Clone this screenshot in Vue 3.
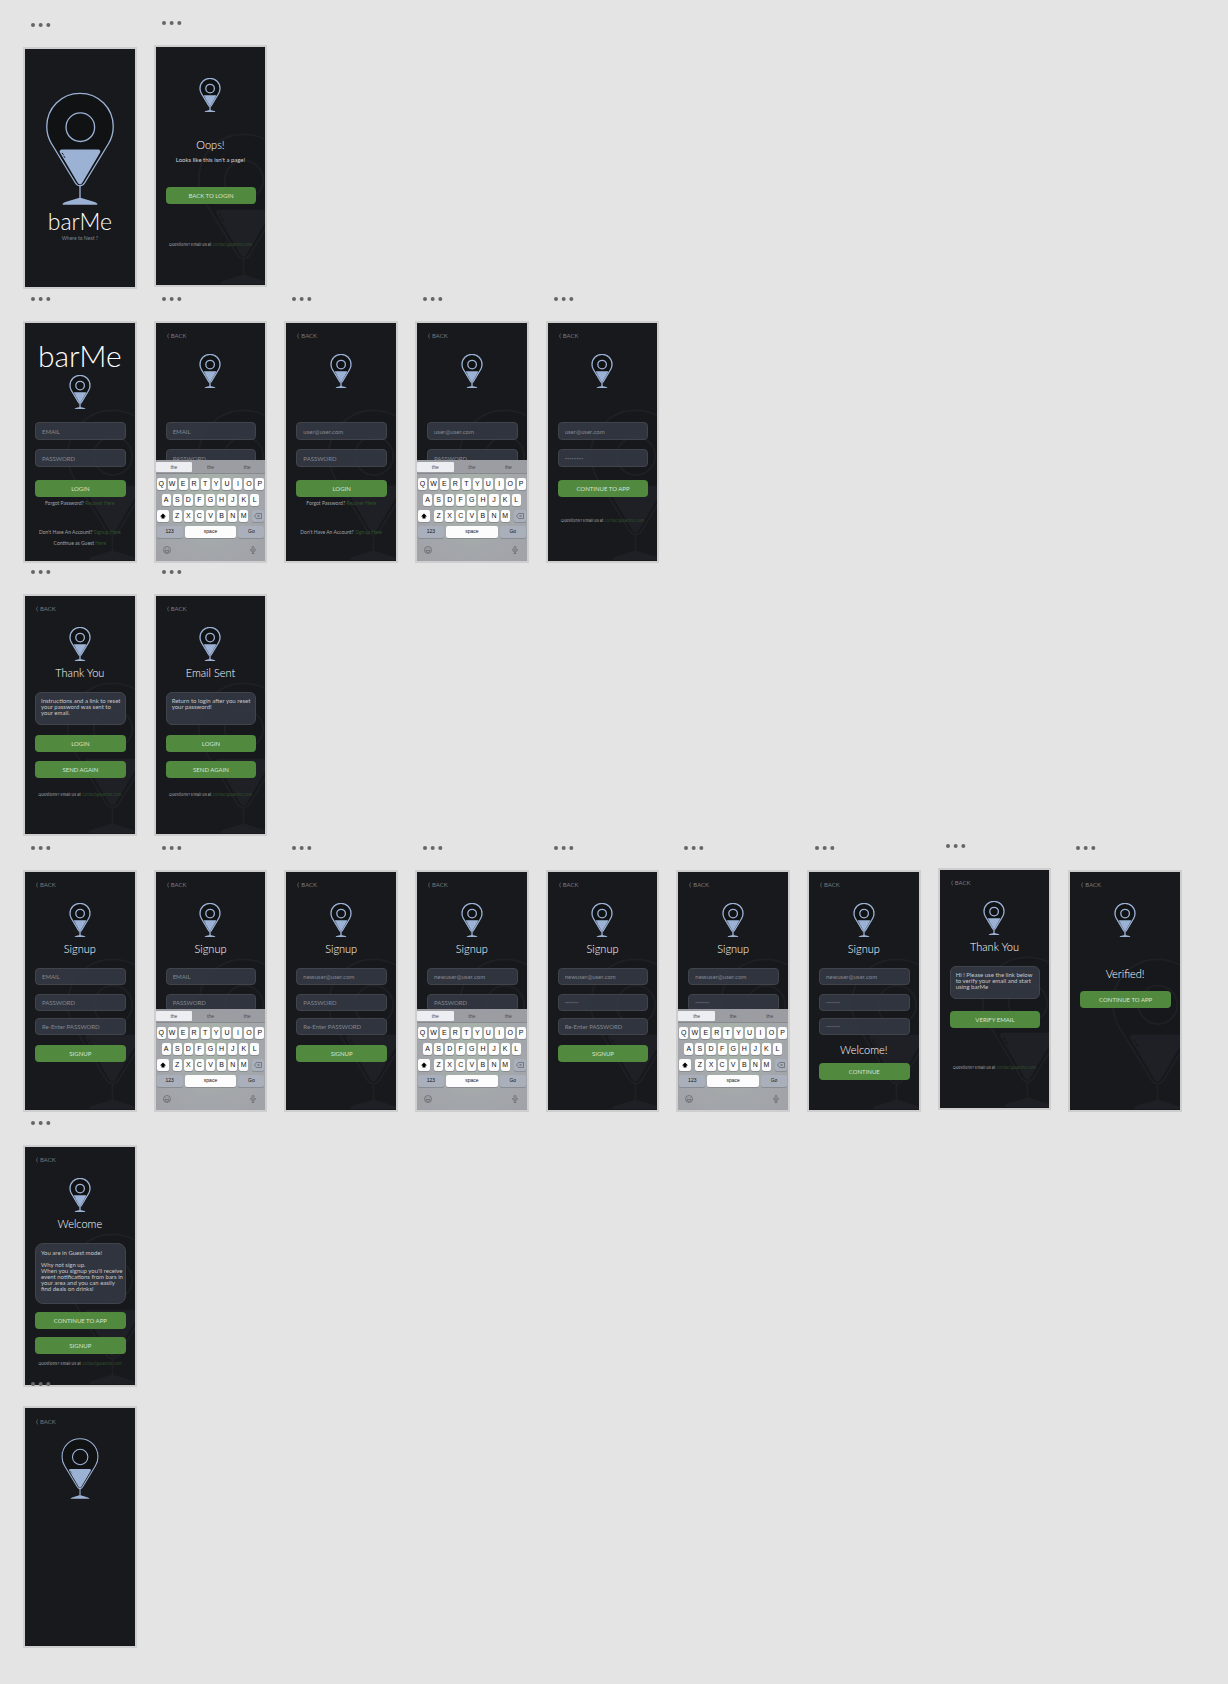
<script setup>
const login = { kind: 'submit', text: 'LOGIN' }
const back = { kind: 'back' }
const logo = { kind: 'logo' }
const contact = { kind: 'note', cls: 'contact', text: 'Questions? Email us at', link: 'contact@barme.com' }
const forgot = { kind: 'note', cls: 'forgot', text: 'Forgot Password?', link: 'Recover Here' }
const join = { kind: 'note', cls: 'join', text: "Don't Have An Account?", link: 'Signup Here' }
const keyboard = { kind: 'keyboard' }

const heading = (text) => ({ kind: 'heading', text })
const button = (text) => ({ kind: 'submit', text })
const card = (text) => ({ kind: 'card', text })
const email = (value = '') => ({ kind: 'field', type: 'text', label: 'EMAIL', value })
const password = (value = '') => ({ kind: 'field', type: 'password', label: 'PASSWORD', value })
const repeat = (value = '') => ({ kind: 'field', type: 'password', label: 'Re-Enter PASSWORD', value })

const secret = '12345678'
const newUser = 'newuser@user.com'

const flows = [
  {
    name: 'start',
    screens: [
      { cls: 'splash', plain: true, blocks: [logo, { kind: 'brand' }, { kind: 'note', cls: 'tagline', text: 'Where to Next ?' }] },
      {
        cls: 'oops raised',
        blocks: [logo, heading('Oops!'), { kind: 'lead', text: "Looks like this isn't a page!" }, button('BACK TO LOGIN'), contact],
      },
    ],
  },
  {
    name: 'login-flow',
    screens: [
      {
        cls: 'login home',
        blocks: [
          { kind: 'brand' }, logo, email(), password(), login, forgot, join,
          { kind: 'note', cls: 'guest', text: 'Continue as Guest', link: 'Here' },
        ],
      },
      { cls: 'login', blocks: [back, logo, email(), password(), keyboard] },
      { cls: 'login', blocks: [back, logo, email('user@user.com'), password(), login, forgot, join] },
      { cls: 'login', blocks: [back, logo, email('user@user.com'), password(), keyboard] },
      { cls: 'login', blocks: [back, logo, email('user@user.com'), password(secret), button('CONTINUE TO APP'), contact] },
    ],
  },
  {
    name: 'reset-flow',
    screens: [
      {
        cls: 'message',
        blocks: [back, logo, heading('Thank You'), card('Instructions and a link to reset\nyour password was sent to\nyour email.'), login, button('SEND AGAIN'), contact],
      },
      {
        cls: 'message',
        blocks: [back, logo, heading('Email Sent'), card('Return to login after you reset\nyour password!'), login, button('SEND AGAIN'), contact],
      },
    ],
  },
  {
    name: 'signup-flow',
    screens: [
      { cls: 'signup', blocks: [back, logo, heading('Signup'), email(), password(), repeat(), button('SIGNUP')] },
      { cls: 'signup', blocks: [back, logo, heading('Signup'), email(), password(), keyboard] },
      { cls: 'signup', blocks: [back, logo, heading('Signup'), email(newUser), password(), repeat(), button('SIGNUP')] },
      { cls: 'signup', blocks: [back, logo, heading('Signup'), email(newUser), password(), keyboard] },
      { cls: 'signup', blocks: [back, logo, heading('Signup'), email(newUser), password(secret), repeat(), button('SIGNUP')] },
      { cls: 'signup', blocks: [back, logo, heading('Signup'), email(newUser), password(secret), keyboard] },
      {
        cls: 'signup done',
        blocks: [back, logo, heading('Signup'), email(newUser), password(secret), repeat(secret), heading('Welcome!'), button('CONTINUE')],
      },
      {
        cls: 'verify raised',
        blocks: [back, logo, heading('Thank You'), card('Hi ! Please use the link below\nto verify your email and start\nusing barMe'), button('VERIFY EMAIL'), contact],
      },
      { cls: 'verified', blocks: [back, logo, heading('Verified!'), button('CONTINUE TO APP')] },
    ],
  },
  {
    name: 'guest-flow',
    screens: [
      {
        cls: 'welcome',
        blocks: [
          back, logo, heading('Welcome'),
          card("You are in Guest mode!\n\nWhy not sign up.\nWhen you signup you'll receive\nevent notifications from bars in\nyour area and you can easily\nfind deals on drinks!"),
          button('CONTINUE TO APP'), button('SIGNUP'), contact,
        ],
      },
    ],
  },
  {
    name: 'blank-flow',
    screens: [{ cls: 'blank', plain: true, blocks: [back, logo] }],
  },
]

const topKeys = [...'QWERTYUIOP']
const homeKeys = [...'ASDFGHJKL']
const lowKeys = [...'ZXCVBNM']
</script>

<template>
  <svg class="defs" width="0" height="0" aria-hidden="true">
    <symbol id="pin" viewBox="0 0 208 340">
      <path class="pin-body" d="M104 4C48 4 4 48 4 104c0 20 5 36 14 51l72 118c7 12 21 12 28 0l72-118c9-15 14-31 14-51C204 48 160 4 104 4Z" stroke="currentColor" />
      <circle cx="105" cy="106" r="43" fill="none" stroke="currentColor" />
      <path d="M50 173h108c7 0 9 5 6 10l-53 90c-3 6-11 6-14 0L44 183c-3-5-1-10 6-10Z" fill="currentColor" stroke="none" />
      <path d="M50 183l4 6M55 192l4 6" stroke="#18191d" stroke-width="3" />
      <path d="M104 282v40" fill="none" stroke="currentColor" />
      <path d="M52 336q2-3 8-5l40-12q4-1 8 0l40 12q6 2 8 5v3H52Z" fill="currentColor" stroke="none" />
    </symbol>
  </svg>

  <main class="canvas">
    <section v-for="flow in flows" :key="flow.name" class="flow" :class="flow.name">
      <article v-for="(screen, s) in flow.screens" :key="s" class="frame" :class="screen.cls">
        <button class="more" aria-label="Artboard options">
          <svg width="20" height="4" viewBox="0 0 60 12">
            <circle cx="6" cy="6" r="6" /><circle cx="29" cy="6" r="6" /><circle cx="52" cy="6" r="6" />
          </svg>
        </button>
        <div class="board">
          <svg v-if="!screen.plain" class="watermark" aria-hidden="true"><use href="#pin" /></svg>
          <template v-for="(block, b) in screen.blocks" :key="b">
            <a v-if="block.kind === 'back'" class="back" href="#">
              <svg width="2" height="6" viewBox="0 0 2 6"><path d="M1.7.5.5 3l1.2 2.5" /></svg>BACK
            </a>
            <svg v-else-if="block.kind === 'logo'" class="logo" role="img" aria-label="barMe logo"><use href="#pin" /></svg>
            <h1 v-else-if="block.kind === 'brand'" class="brand">barMe</h1>
            <h2 v-else-if="block.kind === 'heading'" class="heading">{{ block.text }}</h2>
            <p v-else-if="block.kind === 'lead'" class="lead">{{ block.text }}</p>
            <input
              v-else-if="block.kind === 'field'"
              class="field"
              :type="block.type"
              :placeholder="block.label"
              :aria-label="block.label"
              :value="block.value"
              :class="{ masked: block.type === 'password' && block.value }"
              autocomplete="off"
            />
            <p v-else-if="block.kind === 'card'" class="card">{{ block.text }}</p>
            <button v-else-if="block.kind === 'submit'" class="action">{{ block.text }}</button>
            <p v-else-if="block.kind === 'note'" class="note" :class="block.cls">
              {{ block.text }} <a v-if="block.link" href="#">{{ block.link }}</a>
            </p>
            <div v-else class="keyboard">
              <div class="suggestions">
                <button class="picked">the</button><button>the</button><button>the</button>
              </div>
              <div class="keys">
                <button v-for="k in topKeys" :key="k" class="key">{{ k }}</button>
              </div>
              <div class="keys inset">
                <button v-for="k in homeKeys" :key="k" class="key">{{ k }}</button>
              </div>
              <div class="keys third">
                <button class="key side" aria-label="Shift">
                  <svg width="6" height="6" viewBox="0 0 12 12"><path d="M6 1 12 7H9v4H3V7H0Z" /></svg>
                </button>
                <div class="keys letters">
                  <button v-for="k in lowKeys" :key="k" class="key">{{ k }}</button>
                </div>
                <button class="key side muted" aria-label="Delete">
                  <svg class="line" width="8" height="6" viewBox="0 0 16 12">
                    <path d="M5 1h10v10H5L1 6Z" /><path d="m7 4 4 4m0-4-4 4" />
                  </svg>
                </button>
              </div>
              <div class="keys bottom">
                <button class="key muted">123</button>
                <button class="key space">space</button>
                <button class="key muted">Go</button>
              </div>
              <div class="tools">
                <button aria-label="Emoji">
                  <svg class="line" width="8" height="8" viewBox="0 0 16 16">
                    <circle cx="8" cy="8" r="7" /><path d="M4 9h8c0 5-8 5-8 0ZM5.500 5v1.500M10.500 5v1.500" />
                  </svg>
                </button>
                <button aria-label="Dictate">
                  <svg class="line" width="6" height="8" viewBox="0 0 12 16">
                    <rect x="4" y="1" width="4" height="8" rx="2" /><path d="M1.500 6v2c0 5 9 5 9 0V6M6 12v3M3.500 15h5" />
                  </svg>
                </button>
              </div>
            </div>
          </template>
        </div>
      </article>
    </section>
  </main>
</template>

<style>
body {
  margin: 0;
  background: #e4e4e4;
}
</style>

<style scoped>
.defs {
  display: block;
}
button,
input {
  font-family: inherit;
  border: 0;
  margin: 0;
  padding: 0;
  background: none;
  box-sizing: border-box;
}
a {
  text-decoration: none;
}
h1,
h2,
p {
  margin: 0;
}
.canvas {
  padding: 23px 46px 36px 23px;
  font-family: Lato, "Open Sans", sans-serif;
}
.flow {
  display: grid;
  grid-template-columns: repeat(9, minmax(0, 1fr));
  gap: 17px;
  align-items: start;
}
.login-flow {
  margin-top: 8px;
}
.reset-flow {
  margin-top: 7px;
}
.signup-flow {
  margin-top: 10px;
}
.guest-flow {
  margin-top: 9px;
}
/* the last artboard's handle overlaps the board above it */
.blank-flow {
  margin-top: -5px;
  position: relative;
}
.raised {
  margin-top: -2px;
}
.more {
  display: block;
  height: 4px;
  margin: 0 0 20px 8px;
}
.more svg {
  display: block;
  fill: #666;
}
.board {
  position: relative;
  display: flex;
  flex-direction: column;
  min-height: 238px;
  overflow: hidden;
  border: 2px solid #cdcecd;
  background: #18191d;
  color: #c4c5c7;
}
.watermark {
  position: absolute;
  left: 41px;
  top: 85px;
  width: 93px;
  height: 153px;
  color: #1f2025;
  stroke-width: 4px;
  fill: #17181c;
}
.board > :not(.watermark) {
  position: relative;
}
.logo {
  align-self: center;
  flex: none;
  width: 22px;
  height: 34px;
  margin-bottom: 1px;
  color: #9cb2d5;
  stroke-width: 13px;
  fill: #111214;
}
.back + .logo {
  margin-top: 15px;
}
.back {
  display: flex;
  align-items: center;
  gap: 2px;
  height: 6px;
  margin: 10px 0 0 11px;
  font-size: 6px;
  line-height: 6px;
  color: #77787b;
}
.back svg {
  fill: none;
  stroke: currentColor;
  stroke-width: 0.6px;
}
.brand {
  font-weight: 300;
  text-align: center;
  color: #fff;
}
.heading {
  margin-top: 3px;
  font-size: 11px;
  line-height: 16px;
  font-weight: 300;
  text-align: center;
  color: #fff;
}
.lead {
  margin-top: 4px;
  font-size: 6px;
  line-height: 6px;
  text-align: center;
  color: #d6d6d8;
}
.field {
  height: 18px;
  margin: 0 9px 0 10px;
  padding: 0 6px;
  border: 1px solid #41444a;
  border-radius: 4px;
  background: rgba(51, 55, 66, 0.92);
  font-size: 6px;
  color: #858891;
}
.field::placeholder {
  color: #85888f;
  opacity: 1;
}
.field.masked {
  font-size: 4px;
  color: #676a72;
}
.signup .field.masked {
  font-size: 3px;
}
.card {
  min-height: 33px;
  margin: 11px 9px 0 10px;
  padding: 5px 4px 5px 5px;
  box-sizing: border-box;
  border: 1px solid #41444a;
  border-radius: 6px;
  background: rgba(51, 55, 66, 0.92);
  font-size: 6px;
  line-height: 6px;
  white-space: pre;
  color: #c6c7ca;
}
.action {
  height: 17px;
  margin: 0 9px 0 10px;
  border-radius: 4px;
  background: #51893f;
  font-size: 6px;
  line-height: 17px;
  color: #d5e3d0;
}
.note {
  font-size: 5px;
  line-height: 6px;
  text-align: center;
  white-space: nowrap;
  color: #a2a3a5;
}
.note a {
  color: #30522b;
}
.contact {
  font-family: Inter, "Open Sans", sans-serif;
  font-size: 4px;
}

.splash .logo {
  width: 70px;
  height: 113px;
  margin: 43px 0 0;
  stroke-width: 4px;
}
.splash .brand {
  margin-top: 3px;
  font-size: 23px;
  line-height: 26px;
}
.tagline {
  margin-top: 1px;
  color: #85868a;
}

.oops .logo {
  margin-top: 31px;
}
.oops .heading {
  margin-top: 24px;
}
.oops .action {
  margin-top: 24px;
}
.oops .contact {
  margin-top: 38px;
}

.login .field {
  margin-top: 33px;
}
.home .brand {
  margin-top: 16px;
  font-size: 30px;
  line-height: 32px;
}
.home .logo {
  margin-top: 4px;
}
.home .field {
  margin-top: 12px;
}
.login .field + .field {
  margin-top: 9px;
}
.login .action {
  margin-top: 13px;
}
.forgot {
  margin-top: 3px;
}
.join {
  margin-top: 23px;
}
.guest {
  margin-top: 5px;
}
.login .contact {
  margin-top: 21px;
}

.message .action {
  margin-top: 9px;
}
.message .card + .action {
  margin-top: 10px;
}
.message .contact {
  margin-top: 14px;
}

.signup .field {
  height: 17px;
  margin-top: 11px;
}
.signup .field + .field {
  margin-top: 9px;
}
.signup .field + .field + .field {
  margin-top: 7px;
}
.signup .action {
  margin-top: 10px;
}
.signup .field + .heading {
  margin-top: 7px;
}
.done .heading + .action {
  margin-top: 5px;
}

.verify .action {
  margin-top: 12px;
}
.verify .contact {
  margin-top: 37px;
}
.verified .heading {
  margin-top: 28px;
}
.verified .action {
  margin-top: 9px;
}

.welcome .card {
  min-height: 61px;
  padding-top: 6px;
  border-radius: 8px;
}
.welcome .action {
  margin-top: 8px;
}
.welcome .contact {
  margin-top: 7px;
}

.blank .back {
  margin-top: 11px;
}
.blank .logo {
  width: 38px;
  height: 61px;
  margin-top: 13px;
  stroke-width: 6px;
}

/* on-screen keyboard, laid over the lower part of the board */
.board > .keyboard {
  position: absolute;
  left: 0;
  right: 0;
  bottom: 0;
  height: 101px;
  display: flex;
  flex-direction: column;
  gap: 4px;
  background: radial-gradient(ellipse at 50% 38%, #a9b7aa 0, #a3a6aa 60%, #a0a2a7 100%);
  font-family: "Liberation Sans", Arial, sans-serif;
}
.suggestions {
  display: flex;
  height: 14px;
  padding: 2px 0 1px;
  box-sizing: border-box;
  background: #9c9da2;
  border-bottom: 1px solid #87898d;
}
.suggestions button {
  flex: 1;
  font-size: 5px;
  line-height: 10px;
  color: #4a4b4e;
}
.suggestions .picked {
  background: #edeef1;
  border-radius: 1px;
}
.keys {
  display: flex;
  gap: 2px;
  height: 12px;
  padding: 0 1px;
}
.inset {
  padding: 0 6px;
}
.key {
  flex: 1 1 0;
  min-width: 0;
  border-radius: 2px;
  background: #fcfcfd;
  box-shadow: 0 1px 0 #898c90;
  font-size: 7px;
  line-height: 12px;
  color: #111113;
}
.key svg {
  display: block;
  margin: 0 auto;
}
.third {
  justify-content: space-between;
}
.third .letters {
  flex: 1;
  padding: 0 2px;
}
.third .side {
  flex: 0 0 12px;
}
.bottom .key {
  font-size: 5px;
  line-height: 10px;
  padding-bottom: 2px;
}
.bottom .space {
  flex-grow: 2;
}
.key.muted {
  background: #a9b0bb;
}
.line {
  fill: none;
  stroke: #55575b;
  stroke-width: 1.2px;
}
.tools {
  display: flex;
  justify-content: space-between;
  padding: 4px 9px 0 7px;
}
.tools svg {
  display: block;
}
</style>
